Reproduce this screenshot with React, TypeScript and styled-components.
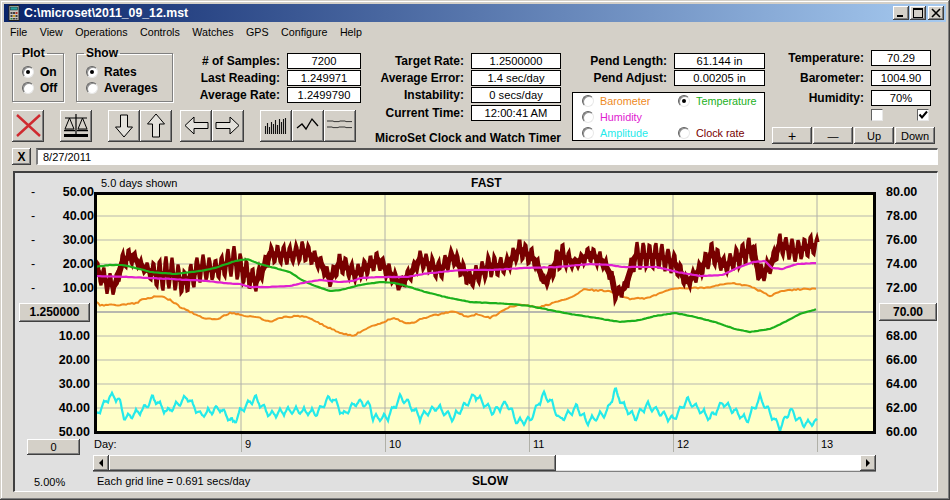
import React from 'react';
import styled, { createGlobalStyle, css } from 'styled-components';

type Pt = [number, number];

const GRAY = '#d4d0c8';
const FONT = '"Liberation Sans", Arial, sans-serif';

const ORANGE = '#ee8a1e';
const GREEN = '#1cb01c';
const MAGENTA = '#e020d0';
const CYAN = '#24eaea';
const MAROON = '#780000';

// curve shapes read off the screenshot, x / y in page pixels
const greenPts: Pt[] = [[94,267],[110,265],[123,265],[140,269],[150,272],[175,274],[200,271],[215,268],[235,261],[247,259],[260,264],[275,268],[290,272],[300,279],[315,286],[330,291],[340,290],[360,285],[380,282],[395,283],[410,287],[425,292],[450,298],[470,302],[490,303],[510,304],[530,306],[550,310],[570,314],[590,317],[620,322],[640,320],[655,316],[675,313],[695,317],[715,322],[735,329],[750,332],[770,329],[785,322],[800,314],[817,309]];
const magentaPts: Pt[] = [[94,276],[130,277],[150,278],[170,279],[190,280],[207,281],[223,283],[240,284],[250,287],[267,287],[290,286],[307,282],[320,280],[340,282],[353,281],[360,278],[383,277],[407,277],[423,274],[440,272],[463,270],[490,270],[523,268],[557,267],[590,264],[610,265],[623,267],[657,267],[677,272],[700,276],[723,275],[737,268],[753,262],[765,261],[772,268],[782,269],[797,264],[817,263]];
const orangePts: Pt[] = [[94,301],[100,305],[123,305],[137,303],[143,299],[160,296],[170,300],[180,307],[197,315],[207,319],[217,319],[230,313],[247,316],[257,317],[270,322],[283,317],[303,316],[317,322],[340,333],[353,336],[360,332],[373,325],[383,323],[392,318],[410,324],[423,318],[453,311],[467,317],[477,314],[490,318],[510,307],[520,305],[540,307],[557,302],[573,296],[585,289],[590,290],[610,291],[630,299],[647,298],[663,292],[677,288],[703,288],[730,283],[750,286],[760,291],[770,296],[783,291],[803,289],[817,289]];
const cyanPts: Pt[] = [[94,418],[110,396],[118,398],[125,418],[143,410],[153,398],[167,412],[187,397],[200,415],[220,408],[233,423],[243,408],[255,398],[270,415],[292,410],[317,413],[327,400],[333,398],[343,415],[357,402],[370,405],[373,418],[388,417],[400,398],[407,402],[420,417],[437,407],[453,418],[475,395],[493,412],[507,403],[517,422],[530,420],[543,395],[550,400],[560,420],[577,407],[587,422],[607,412],[615,390],[623,405],[635,418],[647,405],[673,420],[687,400],[710,418],[723,403],[747,420],[760,398],[780,428],[790,410],[803,424],[817,422]];
const redTop: Pt[] = [[94,257],[107,270],[115,277],[123,250],[132,247],[145,263],[160,258],[170,255],[185,270],[200,252],[215,260],[233,244],[245,258],[256,270],[265,255],[270,245],[290,245],[305,240],[320,255],[330,270],[340,252],[355,265],[378,250],[400,277],[412,263],[420,250],[440,260],[452,247],[470,270],[490,253],[505,258],[520,238],[535,250],[545,277],[560,240],[575,257],[590,245],[603,253],[612,270],[615,287],[625,280],[635,242],[660,242],[675,252],[687,275],[700,260],[712,240],[725,257],[745,240],[752,235],[760,263],[770,257],[780,233],[795,240],[810,235],[817,237]];
const redBottom: Pt[] = [[94,277],[107,295],[115,295],[123,270],[132,265],[145,275],[160,292],[170,290],[185,295],[200,283],[215,280],[233,277],[245,287],[256,293],[265,275],[270,263],[290,265],[305,262],[320,270],[330,288],[340,273],[355,283],[378,270],[400,292],[412,280],[420,268],[440,282],[452,265],[470,290],[490,278],[505,275],[520,260],[535,270],[545,290],[560,270],[575,270],[590,263],[603,270],[612,285],[615,302],[625,295],[635,270],[660,270],[675,275],[687,290],[700,280],[712,265],[725,275],[745,265],[752,262],[760,288],[770,275],[780,255],[795,263],[810,257],[817,255]];

const at = (pts: Pt[], x: number) => {
  for (let i = 1; i < pts.length; i++) {
    if (x <= pts[i][0]) {
      const [x0, y0] = pts[i - 1];
      const [x1, y1] = pts[i];
      return y0 + ((y1 - y0) * (x - x0)) / (x1 - x0);
    }
  }
  return pts[pts.length - 1][1];
};

let seed = 11;
const rnd = () => {
  seed = (seed * 16807) % 2147483647;
  return seed / 2147483647 - 0.5;
};

const smooth = (pts: Pt[], jitter: number, step = 2) => {
  const out: string[] = [];
  for (let x = 94; x <= 817; x += step) {
    out.push(`${x},${(at(pts, x) + rnd() * jitter).toFixed(1)}`);
  }
  return out.join(' ');
};

const redLine = () => {
  const out: string[] = [];
  for (let x = 94; x <= 818; x += 1) {
    const top = at(redTop, x) + 1;
    const bot = at(redBottom, x) - 1;
    const w = 0.5 + 0.5 * Math.sin((x * Math.PI * 2) / 6.2);
    out.push(`${x},${(top + (bot - top) * w + rnd() * 2).toFixed(1)}`);
  }
  return out.join(' ');
};

// the body of the band: keeps the oscillation looking solid
const redCore = () => {
  const out: string[] = [];
  for (let x = 94; x <= 817; x += 2) {
    out.push(`${x},${((at(redTop, x) + at(redBottom, x)) / 2).toFixed(1)}`);
  }
  return out.join(' ');
};

const cyanLine = () => {
  const out: string[] = [];
  for (let x = 94; x <= 817; x += 1) {
    const phase = (x % 8) / 8;
    const saw = (phase < 0.5 ? phase * 2 : 2 - phase * 2) * 7 - 3.5;
    out.push(`${x},${(at(cyanPts, x) + saw + rnd() * 1.4).toFixed(1)}`);
  }
  return out.join(' ');
};

const GRID_Y = [216, 240, 264, 336, 360, 384, 408, 288];
const GRID_X = [241, 385, 529, 673, 817];

const GlobalStyle = createGlobalStyle`
  html, body {
    margin: 0;
    padding: 0;
    width: 950px;
    height: 500px;
    overflow: hidden;
    background: ${GRAY};
    font-family: ${FONT};
    font-size: 11px;
    color: #000;
  }
`;

const raised = css`
  background: ${GRAY};
  box-shadow: inset -1px -1px 0 #404040, inset 1px 1px 0 #fff, inset -2px -2px 0 #808080, inset 2px 2px 0 ${GRAY};
`;

const Window = styled.div`
  box-sizing: border-box;
  width: 950px;
  height: 500px;
  padding: 4px;
  display: flex;
  flex-direction: column;
  background: ${GRAY};
  box-shadow: inset -1px -1px 0 #404040, inset 1px 1px 0 ${GRAY}, inset -2px -2px 0 #808080, inset 2px 2px 0 #fff;
`;

const TitleBar = styled.div`
  height: 18px;
  display: flex;
  align-items: center;
  padding: 0 2px 0 3px;
  background: linear-gradient(90deg, #0a246a, #a6caf0);
  color: #fff;
  font-weight: bold;
  font-size: 12.3px;
`;

const TitleText = styled.span`
  margin-left: 1px;
  flex: 1;
`;

const CaptionBtn = styled.button`
  ${raised};
  width: 16px;
  height: 14px;
  padding: 0;
  border: 0;
  margin-left: ${(p: { $gap?: number }) => p.$gap ?? 0}px;
  display: flex;
  align-items: center;
  justify-content: center;
`;

const MenuBar = styled.div`
  height: 20px;
  display: flex;
  align-items: center;
  gap: 12.5px;
  padding-left: 6px;
  font-size: 10.7px;
`;

const Controls = styled.div`
  height: 106px;
  box-sizing: border-box;
  padding: 8px 0 0 8px;
  display: flex;
  align-items: flex-start;
`;

const LeftBlock = styled.div`
  width: 349px;
  display: flex;
  flex-direction: column;
`;

const TopRow = styled.div`
  height: 60px;
  display: flex;
`;

const Group = styled.fieldset<{ $w: number; $ml?: number }>`
  box-sizing: border-box;
  width: ${(p) => p.$w}px;
  height: 56px;
  margin: -4px 0 0 ${(p) => p.$ml ?? 0}px;
  padding: 4px 0 0 9px;
  border: 1px solid #808080;
  box-shadow: 1px 1px 0 #fff, inset 1px 1px 0 #fff;
  min-width: 0;
`;

const GroupTitle = styled.legend`
  font-weight: bold;
  font-size: 12px;
  padding: 0 2px;
  margin-left: -2px;
`;

const OptionRow = styled.div<{ $bold?: boolean; $color?: string }>`
  height: 16px;
  display: flex;
  align-items: center;
  gap: 6px;
  font-weight: ${(p) => (p.$bold ? 'bold' : 'normal')};
  font-size: ${(p) => (p.$bold ? '12px' : '10.8px')};
  color: ${(p) => p.$color ?? '#000'};
  white-space: nowrap;
`;

const RadioDot = styled.span<{ $on?: boolean }>`
  position: relative;
  flex: none;
  box-sizing: border-box;
  width: 12px;
  height: 12px;
  border-radius: 50%;
  background: #fff;
  border: 1px solid;
  border-color: #606060 #e8e8e8 #e8e8e8 #606060;
  box-shadow: inset 1px 1px 0 #909090;
  &::after {
    content: '';
    display: ${(p) => (p.$on ? 'block' : 'none')};
    position: absolute;
    left: 3px;
    top: 3px;
    width: 4px;
    height: 4px;
    border-radius: 50%;
    background: #000;
  }
`;

const FieldCol = styled.div<{ $w: number; $ml?: number; $pr?: number }>`
  width: ${(p) => p.$w}px;
  flex: none;
  margin-left: ${(p) => p.$ml ?? 0}px;
  padding-right: ${(p) => p.$pr ?? 0}px;
  box-sizing: border-box;
  display: flex;
  flex-direction: column;
  align-items: stretch;
`;

const Field = styled.div<{ $mt?: number }>`
  display: flex;
  justify-content: flex-end;
  align-items: center;
  gap: 7px;
  height: 16px;
  margin-top: ${(p) => p.$mt ?? 1}px;
`;

const FieldLabel = styled.span`
  font-weight: bold;
  font-size: 12px;
  white-space: nowrap;
`;

const ValueBox = styled.div<{ $w: number }>`
  box-sizing: border-box;
  flex: none;
  width: ${(p) => p.$w}px;
  height: 16px;
  line-height: 14px;
  font-size: 11.2px;
  background: #fff;
  border: 1px solid #000;
  text-align: center;
`;

const ClockTitle = styled.div`
  margin-top: 10px;
  text-align: right;
  font-weight: bold;
  font-size: 12px;
  white-space: nowrap;
`;

const Legend = styled.div`
  box-sizing: border-box;
  height: 49px;
  margin-top: 6px;
  padding: 0 0 0 9px;
  background: #fff;
  border: 1px solid #000;
  display: grid;
  grid-template-columns: 96px 1fr;
  grid-auto-rows: 16px;
`;

const CheckRow = styled.div`
  display: flex;
  gap: 34px;
  margin-top: 3px;
  padding-left: 99px;
`;

const CheckBox = styled.span`
  box-sizing: border-box;
  width: 12px;
  height: 12px;
  background: #fff;
  border: 1px solid;
  border-color: #606060 #e8e8e8 #e8e8e8 #606060;
  display: flex;
  align-items: center;
  justify-content: center;
`;

const ButtonRow = styled.div`
  display: flex;
  gap: 1px;
  margin-top: 6px;
`;

const TextBtn = styled.button<{ $w?: number; $h?: number; $bold?: boolean; $size?: number }>`
  ${raised};
  border: 0;
  padding: 0;
  flex: none;
  width: ${(p) => p.$w ?? 40}px;
  height: ${(p) => p.$h ?? 17}px;
  font-family: ${FONT};
  font-size: ${(p) => p.$size ?? (p.$bold ? 12 : 11)}px;
  font-weight: ${(p) => (p.$bold ? 'bold' : 'normal')};
  color: #000;
`;

const IconRow = styled.div`
  display: flex;
`;

const IconBtn = styled.button<{ $ml?: number }>`
  ${raised};
  border: 0;
  padding: 0;
  flex: none;
  width: 32px;
  height: 32px;
  margin-left: ${(p) => p.$ml ?? 0}px;
  display: block;
  svg {
    display: block;
  }
`;

const DateRow = styled.div`
  height: 17px;
  display: flex;
  gap: 5px;
  padding: 0 8px;
`;

const SmallX = styled.button`
  ${raised};
  border: 0;
  padding: 0;
  width: 19px;
  height: 17px;
  font-family: ${FONT};
  font-weight: bold;
  font-size: 12px;
`;

const DateInput = styled.div`
  flex: 1;
  box-sizing: border-box;
  height: 17px;
  padding-left: 5px;
  line-height: 14px;
  background: #fff;
  border-top: 2px solid #555;
  border-left: 2px solid #808080;
  border-right: 1px solid #fff;
  border-bottom: 1px solid #fff;
`;

const ChartPanel = styled.div`
  box-sizing: border-box;
  width: 925px;
  height: 321px;
  margin: 6px 0 0 9px;
  background: #e0e0e0;
  border-top: 2px solid #404040;
  border-left: 2px solid #404040;
  border-right: 1px solid #fff;
  border-bottom: 1px solid #fff;
  display: grid;
  grid-template-columns: 79px 782px 1fr;
`;

const AxisCol = styled.div`
  display: flex;
  flex-direction: column;
  padding-top: 7px;
`;

const AxisRow = styled.div<{ $h?: number; $pr?: number; $pl?: number }>`
  flex: none;
  height: ${(p) => p.$h ?? 24}px;
  line-height: 24px;
  display: flex;
  justify-content: space-between;
  padding: 0 ${(p) => p.$pr ?? 0}px 0 ${(p) => p.$pl ?? 0}px;
  font-weight: bold;
  font-size: 12.5px;
`;

const Dash = styled.span`
  font-weight: normal;
  margin-left: 16px;
`;

const AxisValue = styled.span`
  margin-left: auto;
`;

const ButtonSlot = styled.div<{ $pl: number; $auto?: boolean }>`
  flex: none;
  height: ${(p) => (p.$auto ? 'auto' : '24px')};
  display: flex;
  align-items: center;
  padding-left: ${(p) => p.$pl}px;
`;

const Percent = styled.div`
  margin-top: auto;
  padding: 0 0 3px 19px;
`;

const Centre = styled.div`
  display: flex;
  flex-direction: column;
`;

const ChartHeader = styled.div`
  height: 19px;
  display: grid;
  grid-template-columns: 370px auto 1fr;
  align-items: center;
  padding-left: 7px;
`;

const ScaleTitle = styled.span`
  font-weight: bold;
  font-size: 12px;
`;

const PlotFrame = styled.div`
  box-sizing: border-box;
  width: 782px;
  height: 242px;
  border: 3px solid #000;
  background: #ffffc8;
  svg {
    display: block;
  }
`;

const DayRow = styled.div`
  height: 21px;
  display: flex;
`;

const DayCell = styled.div<{ $w: number; $tick?: boolean }>`
  flex: none;
  box-sizing: border-box;
  width: ${(p) => p.$w}px;
  height: 18px;
  padding: 4px 0 0 ${(p) => (p.$tick ? 3 : 0)}px;
  border-left: ${(p) => (p.$tick ? '1px solid #b0b0a8' : '0')};
`;

const ScrollBar = styled.div`
  height: 16px;
  margin-left: -1px;
  width: 783px;
  display: flex;
  box-shadow: 0 1px 0 #808080;
`;

const ScrollArrow = styled.div`
  ${raised};
  flex: none;
  width: 16px;
  height: 16px;
  display: flex;
  align-items: center;
  justify-content: center;
`;

const ScrollThumb = styled.div`
  ${raised};
  flex: none;
  width: 447px;
  height: 16px;
`;

const ScrollTrack = styled.div`
  flex: 1;
  height: 15px;
  background: #fff;
`;

const Triangle = styled.span<{ $dir: 'left' | 'right' }>`
  width: 0;
  height: 0;
  border-top: 4px solid transparent;
  border-bottom: 4px solid transparent;
  ${(p) => (p.$dir === 'left' ? 'border-right: 4px solid #000;' : 'border-left: 4px solid #000;')}
`;

const ChartFooter = styled.div`
  flex: 1;
  display: grid;
  grid-template-columns: 375px auto 1fr;
  align-items: center;
  padding-left: 3px;
`;

const CalcIcon = () => (
  <svg width="16" height="16" viewBox="0 0 16 16">
    <rect x="2" y="0.5" width="10" height="15" fill="#c8c8c0" stroke="#202020" />
    <rect x="3.5" y="2" width="7" height="3" fill="#2ba0a0" stroke="#0c3030" strokeWidth="0.6" />
    <rect x="3.5" y="7" width="2" height="2" fill="#404040" />
    <rect x="6" y="7" width="2" height="2" fill="#404040" />
    <rect x="8.5" y="7" width="2" height="2" fill="#b03020" />
    <rect x="3.5" y="10" width="2" height="2" fill="#404040" />
    <rect x="6" y="10" width="2" height="2" fill="#d0a020" />
    <rect x="8.5" y="10" width="2" height="2" fill="#404040" />
    <rect x="3.5" y="13" width="2" height="1.5" fill="#208040" />
    <rect x="6" y="13" width="2" height="1.5" fill="#404040" />
    <rect x="8.5" y="13" width="2" height="1.5" fill="#404040" />
  </svg>
);

const arrowShapes: Record<string, string> = {
  down: '12.5,5 19.5,5 19.5,17 24.5,17 16,27 7.5,17 12.5,17',
  up: '12.5,27 19.5,27 19.5,14 24.5,14 16,4 7.5,14 12.5,14',
  left: '28,12.5 28,18.5 14,18.5 14,24 5,15.5 14,7 14,12.5',
  right: '4,12.5 4,18.5 18,18.5 18,24 27,15.5 18,7 18,12.5',
};

const ArrowIcon = ({ dir }: { dir: string }) => (
  <svg width="32" height="32" viewBox="0 0 32 32">
    <polygon points={arrowShapes[dir]} fill="#e4e2dc" stroke="#000" strokeWidth="1" />
  </svg>
);

const barHeights = [8, 11, 7, 12, 10, 14, 9, 15, 12, 15, 16];

const App = () => {
  const red = redLine();
  const core = redCore();
  const green = smooth(greenPts, 0.4);
  const magenta = smooth(magentaPts, 0.4);
  const orange = smooth(orangePts, 1.4);
  const cyan = cyanLine();

  const leftUpper = ['50.00', '40.00', '30.00', '20.00', '10.00'];
  const leftLower = ['10.00', '20.00', '30.00', '40.00'];
  const rightTop = ['80.00', '78.00', '76.00', '74.00', '72.00'];
  const rightBottom = ['68.00', '66.00', '64.00', '62.00', '60.00'];

  return (
    <Window>
      <GlobalStyle />
      <TitleBar>
        <CalcIcon />
        <TitleText>C:\microset\2011_09_12.mst</TitleText>
        <CaptionBtn>
          <svg width="10" height="10" viewBox="0 0 10 10"><rect x="1" y="7" width="6" height="2" fill="#000" /></svg>
        </CaptionBtn>
        <CaptionBtn $gap={1}>
          <svg width="10" height="10" viewBox="0 0 10 10"><rect x="0.5" y="0.5" width="9" height="9" fill="none" stroke="#000" /><rect x="0" y="0" width="10" height="2" fill="#000" /></svg>
        </CaptionBtn>
        <CaptionBtn $gap={2}>
          <svg width="10" height="10" viewBox="0 0 10 10"><path d="M1 1 L9 9 M9 1 L1 9" stroke="#000" strokeWidth="1.6" /></svg>
        </CaptionBtn>
      </TitleBar>

      <MenuBar>
        {['File', 'View', 'Operations', 'Controls', 'Watches', 'GPS', 'Configure', 'Help'].map((m) => (
          <span key={m}>{m}</span>
        ))}
      </MenuBar>

      <Controls>
        <LeftBlock>
          <TopRow>
            <Group $w={52}>
              <GroupTitle>Plot</GroupTitle>
              <OptionRow $bold><RadioDot $on />On</OptionRow>
              <OptionRow $bold><RadioDot />Off</OptionRow>
            </Group>
            <Group $w={97} $ml={12}>
              <GroupTitle>Show</GroupTitle>
              <OptionRow $bold><RadioDot $on />Rates</OptionRow>
              <OptionRow $bold><RadioDot />Averages</OptionRow>
            </Group>
            <FieldCol $w={188}>
              <Field $mt={3}><FieldLabel># of Samples:</FieldLabel><ValueBox $w={74}>7200</ValueBox></Field>
              <Field><FieldLabel>Last Reading:</FieldLabel><ValueBox $w={74}>1.249971</ValueBox></Field>
              <Field><FieldLabel>Average Rate:</FieldLabel><ValueBox $w={74}>1.2499790</ValueBox></Field>
            </FieldCol>
          </TopRow>
          <IconRow>
            <IconBtn>
              <svg width="32" height="32" viewBox="0 0 32 32">
                <path d="M5 5 L28 26 M28 5 L5 26" stroke="#cf2a30" strokeWidth="2.4" />
              </svg>
            </IconBtn>
            <IconBtn $ml={16}>
              <svg width="32" height="32" viewBox="0 0 32 32">
                <rect x="4" y="24" width="24" height="3" fill="#000" />
                <path d="M16 4 V24 M5 8 H27" stroke="#000" strokeWidth="1.2" fill="none" />
                <path d="M9.5 8 L5 19 H14 Z M22.5 8 L18 19 H27 Z" stroke="#000" strokeWidth="1" fill="none" />
                <path d="M4 20.5 H15 M17 20.5 H28" stroke="#000" strokeWidth="1.4" />
              </svg>
            </IconBtn>
            <IconBtn $ml={16}><ArrowIcon dir="down" /></IconBtn>
            <IconBtn><ArrowIcon dir="up" /></IconBtn>
            <IconBtn $ml={8}><ArrowIcon dir="left" /></IconBtn>
            <IconBtn><ArrowIcon dir="right" /></IconBtn>
            <IconBtn $ml={16}>
              <svg width="32" height="32" viewBox="0 0 32 32">
                {barHeights.map((h, i) => (
                  <line key={i} x1={5.5 + i * 2} x2={5.5 + i * 2} y1={24} y2={24 - h} stroke="#111" strokeWidth="1.1" />
                ))}
              </svg>
            </IconBtn>
            <IconBtn>
              <svg width="32" height="32" viewBox="0 0 32 32">
                <polyline points="5,18 10,14 14,19 20,9 26,16" fill="none" stroke="#000" strokeWidth="1.3" />
              </svg>
            </IconBtn>
            <IconBtn>
              <svg width="32" height="32" viewBox="0 0 32 32">
                <path d="M3 11 h6 l1 .6 h5 l1 -.6 h5 l1 .6 h6 M3 17 h5 l1 .6 h5 l1 -.6 h6 l1 .6 h6" fill="none" stroke="#222" strokeWidth="0.9" />
              </svg>
            </IconBtn>
          </IconRow>
        </LeftBlock>

        <FieldCol $w={196} $ml={4}>
          <Field $mt={3}><FieldLabel>Target Rate:</FieldLabel><ValueBox $w={90}>1.2500000</ValueBox></Field>
          <Field><FieldLabel>Average Error:</FieldLabel><ValueBox $w={90}>1.4 sec/day</ValueBox></Field>
          <Field><FieldLabel>Instability:</FieldLabel><ValueBox $w={90}>0 secs/day</ValueBox></Field>
          <Field $mt={2}><FieldLabel>Current Time:</FieldLabel><ValueBox $w={90}>12:00:41 AM</ValueBox></Field>
          <ClockTitle>MicroSet Clock and Watch Timer</ClockTitle>
        </FieldCol>

        <FieldCol $w={193} $ml={11}>
          <Field $mt={3}><FieldLabel>Pend Length:</FieldLabel><ValueBox $w={91}>61.144 in</ValueBox></Field>
          <Field><FieldLabel>Pend Adjust:</FieldLabel><ValueBox $w={91}>0.00205 in</ValueBox></Field>
          <Legend>
            <OptionRow $color={ORANGE}><RadioDot />Barometer</OptionRow>
            <OptionRow $color={GREEN}><RadioDot $on />Temperature</OptionRow>
            <OptionRow $color={MAGENTA}><RadioDot />Humidity</OptionRow>
            <span />
            <OptionRow $color={CYAN}><RadioDot />Amplitude</OptionRow>
            <OptionRow $color={MAROON}><RadioDot />Clock rate</OptionRow>
          </Legend>
        </FieldCol>

        <FieldCol $w={167} $ml={7} $pr={8}>
          <Field $mt={0}><FieldLabel>Temperature:</FieldLabel><ValueBox $w={60}>70.29</ValueBox></Field>
          <Field $mt={4}><FieldLabel>Barometer:</FieldLabel><ValueBox $w={60}>1004.90</ValueBox></Field>
          <Field $mt={4}><FieldLabel>Humidity:</FieldLabel><ValueBox $w={60}>70%</ValueBox></Field>
          <CheckRow>
            <CheckBox />
            <CheckBox>
              <svg width="10" height="10" viewBox="0 0 10 10"><path d="M1.5 4.5 L4 7.5 L9 1.5" fill="none" stroke="#000" strokeWidth="2" /></svg>
            </CheckBox>
          </CheckRow>
          <ButtonRow>
            <TextBtn $size={14}>+</TextBtn>
            <TextBtn>—</TextBtn>
            <TextBtn>Up</TextBtn>
            <TextBtn>Down</TextBtn>
          </ButtonRow>
        </FieldCol>
      </Controls>

      <DateRow>
        <SmallX>X</SmallX>
        <DateInput>8/27/2011</DateInput>
      </DateRow>

      <ChartPanel>
        <AxisCol>
          {leftUpper.map((v) => (
            <AxisRow key={v}><Dash>-</Dash><AxisValue>{v}</AxisValue></AxisRow>
          ))}
          <ButtonSlot $pl={4}><TextBtn $w={71} $h={19} $bold>1.250000</TextBtn></ButtonSlot>
          {leftLower.map((v) => (
            <AxisRow key={v} $pr={4}><AxisValue>{v}</AxisValue></AxisRow>
          ))}
          <AxisRow $h={19} $pr={4}><AxisValue>50.00</AxisValue></AxisRow>
          <ButtonSlot $pl={12} $auto><TextBtn $w={53} $h={16}>0</TextBtn></ButtonSlot>
          <Percent>5.00%</Percent>
        </AxisCol>

        <Centre>
          <ChartHeader>
            <span>5.0 days shown</span>
            <ScaleTitle>FAST</ScaleTitle>
            <span />
          </ChartHeader>
          <PlotFrame>
            <svg width="776" height="236" viewBox="97 195 776 236">
              {GRID_Y.map((y) => (
                <line key={y} x1={97} x2={873} y1={y} y2={y} stroke="#b8b8ae" strokeWidth="1.2" />
              ))}
              <line x1={97} x2={873} y1={312} y2={312} stroke="#b8b8ae" strokeWidth="2.2" />
              {GRID_X.map((x) => (
                <line key={x} x1={x} x2={x} y1={195} y2={431} stroke="#b0b0a8" strokeWidth="1" />
              ))}
              <polyline points={orange} fill="none" stroke={ORANGE} strokeWidth="2" />
              <polyline points={cyan} fill="none" stroke={CYAN} strokeWidth="2.2" />
              <polyline points={core} fill="none" stroke={MAROON} strokeWidth="6" />
              <polyline points={red} fill="none" stroke={MAROON} strokeWidth="3.2" />
              <polyline points={green} fill="none" stroke={GREEN} strokeWidth="2.2" />
              <polyline points={magenta} fill="none" stroke={MAGENTA} strokeWidth="2.2" />
            </svg>
          </PlotFrame>
          <DayRow>
            <DayCell $w={147}>Day:</DayCell>
            {['9', '10', '11', '12', '13'].map((d) => (
              <DayCell key={d} $w={144} $tick>{d}</DayCell>
            ))}
          </DayRow>
          <ScrollBar>
            <ScrollArrow><Triangle $dir="left" /></ScrollArrow>
            <ScrollThumb />
            <ScrollTrack />
            <ScrollArrow><Triangle $dir="right" /></ScrollArrow>
          </ScrollBar>
          <ChartFooter>
            <span>Each grid line = 0.691 secs/day</span>
            <ScaleTitle>SLOW</ScaleTitle>
            <span />
          </ChartFooter>
        </Centre>

        <AxisCol>
          {rightTop.map((v) => (
            <AxisRow key={v} $pl={10}>{v}</AxisRow>
          ))}
          <ButtonSlot $pl={3}><TextBtn $w={58} $h={18} $bold>70.00</TextBtn></ButtonSlot>
          {rightBottom.map((v) => (
            <AxisRow key={v} $pl={10}>{v}</AxisRow>
          ))}
        </AxisCol>
      </ChartPanel>
    </Window>
  );
};

export default App;
